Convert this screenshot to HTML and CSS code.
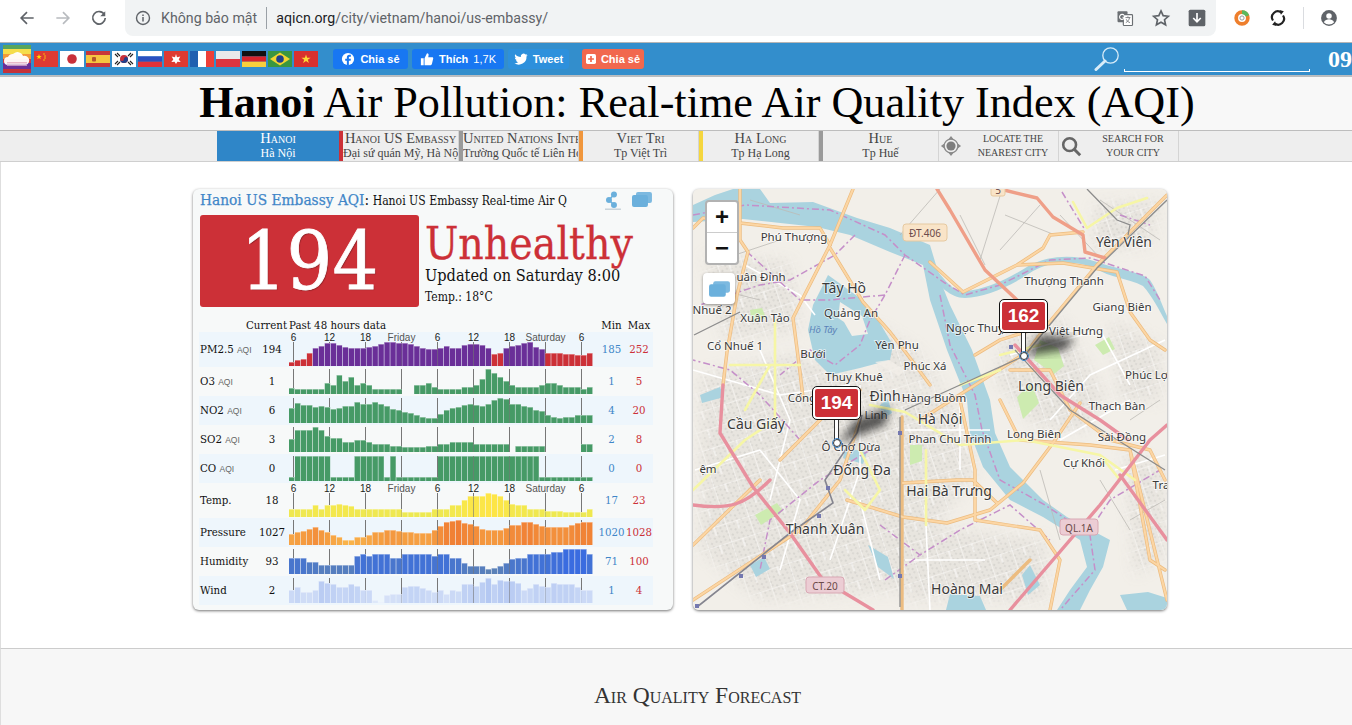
FILE: index.html
```html
<!DOCTYPE html>
<html lang="vi">
	<head>
		<meta charset="UTF-8" />
		<title>Hanoi Air Pollution: Real-time Air Quality Index (AQI)</title>
		<link rel="stylesheet" href="styles.css">
	</head>
	<body>
		<!-- browser toolbar -->
		<div class="chrome">
			<div class="chromeNav">
				<svg class="ico" viewBox="0 0 24 24"><path d="M20 12H5M12 5l-7 7 7 7" fill="none" stroke="#5f6368" stroke-width="2"/></svg>
				<svg class="ico" viewBox="0 0 24 24"><path d="M4 12h15M12 5l7 7-7 7" fill="none" stroke="#b8bbbf" stroke-width="2"/></svg>
				<svg class="ico" viewBox="0 0 24 24"><path d="M18.5 8A7.5 7.5 0 1 0 19.5 12" fill="none" stroke="#5f6368" stroke-width="2"/><path d="M19.5 4v6h-6z" fill="#5f6368"/></svg>
			</div>
			<div class="omnibox">
				<svg class="infoIco" viewBox="0 0 16 16"><circle cx="8" cy="8" r="6.5" fill="none" stroke="#5f6368" stroke-width="1.4"/><path d="M8 7v4.5M8 4.4v1.5" stroke="#5f6368" stroke-width="1.5"/></svg>
				<span class="notSecure">Không bảo mật</span>
				<span class="omniSep"></span>
				<span class="url"><b>aqicn.org</b>/city/vietnam/hanoi/us-embassy/</span>
				<span class="omniRight">
					<svg class="ico" viewBox="0 0 24 24"><rect x="3" y="4" width="12" height="13" rx="1" fill="#6b6f73"/><rect x="10" y="8" width="11" height="13" rx="1" fill="#fff" stroke="#6b6f73" stroke-width="1.4"/><path d="M12.5 11.5h6M15.5 10v1.5M17.5 11.5c-.5 3-2.500 5-4.500 6M13.500 13.500c.8 2 2.500 3.500 4.500 4" stroke="#6b6f73" fill="none"/><path d="M11 9a3 3 0 1 0 .5 2H9" stroke="#fff" fill="none" stroke-width="1.300"/></svg>
					<svg class="ico" viewBox="0 0 24 24"><path d="M12 3.500l2.600 5.700 6.200.7-4.600 4.200 1.300 6.100-5.500-3.100-5.500 3.100 1.300-6.100-4.600-4.200 6.200-.7z" fill="none" stroke="#5f6368" stroke-width="2"/></svg>
					<svg class="ico saveIco" viewBox="0 0 24 24"><rect x="2" y="2" width="20" height="20" rx="2" fill="#5f6368"/><path d="M12 6v10M7.500 12l4.500 4.500 4.500-4.500" stroke="#fff" stroke-width="2" fill="none"/></svg>
				</span>
			</div>
			<div class="chromeExt">
				<svg class="ico" viewBox="0 0 24 24"><circle cx="12" cy="12" r="7" fill="none" stroke="#ee7f2d" stroke-width="4.500"/><path d="M12 5a7 7 0 0 1 6.500 4.500" fill="none" stroke="#5cb85c" stroke-width="4.500"/><circle cx="12" cy="12" r="2.500" fill="none" stroke="#888"/></svg>
				<svg class="ico" viewBox="0 0 24 24"><path d="M6 15a7 7 0 0 1 10-9.500M18 9a7 7 0 0 1-10 9.500" fill="none" stroke="#222" stroke-width="2.600"/><path d="M14 2.500l5 1.500-3.500 4zM10 21.500l-5-1.500 3.500-4z" fill="#222"/></svg>
				<span class="extSep"></span>
				<svg class="ico" viewBox="0 0 24 24"><circle cx="12" cy="12" r="9.500" fill="#5f6368"/><circle cx="12" cy="9.500" r="3.300" fill="#fff"/><path d="M5.800 17c1.500-2.500 3.700-3.500 6.200-3.500s4.700 1 6.200 3.500a8 8 0 0 1-12.400 0z" fill="#fff"/></svg>
			</div>
		</div>

		<!-- blue top bar -->
		<div class="topBar">
			<svg class="logo" viewBox="0 0 28 28">
				<rect width="28" height="4" fill="#58a55c"/><rect y="4" width="28" height="5" fill="#f5dd4b"/><rect y="9" width="28" height="5" fill="#f39a3a"/><rect y="14" width="28" height="4" fill="#d63a3c"/><rect y="18" width="28" height="6" fill="#6a2f98"/><rect y="24" width="28" height="4" fill="#c5333a"/>
				<path d="M5 20a4 4 0 0 1 0-8 5 5 0 0 1 5-3 6 6 0 0 1 10 2 4.500 4.500 0 0 1 3 9z" fill="#fff" opacity=".95"/>
				<rect x="4" y="17" width="20" height="1.500" fill="#e8b8c8"/><rect x="4" y="19.500" width="20" height="1.500" fill="#c090c0"/>
			</svg>
			<div class="flags">
				<svg class="flag" viewBox="0 0 24 16"><rect width="24" height="16" fill="#de3a32"/><path d="M5 3l.7 2h2l-1.600 1.200.6 2L5 7l-1.700 1.200.6-2L2.300 5h2z" fill="#fd0"/><circle cx="10" cy="3" r=".7" fill="#fd0"/><circle cx="11" cy="5" r=".7" fill="#fd0"/><circle cx="11" cy="7" r=".7" fill="#fd0"/><circle cx="10" cy="9" r=".7" fill="#fd0"/></svg>
				<svg class="flag" viewBox="0 0 24 16"><rect width="24" height="16" fill="#fff"/><circle cx="12" cy="8" r="4.800" fill="#c8303a"/></svg>
				<svg class="flag" viewBox="0 0 24 16"><rect width="24" height="16" fill="#c8383a"/><rect y="4" width="24" height="8" fill="#f6c640"/><rect x="6" y="6" width="4" height="4.500" rx="1" fill="#b5562c"/></svg>
				<svg class="flag" viewBox="0 0 24 16"><rect width="24" height="16" fill="#fff"/><circle cx="12" cy="8" r="4" fill="#c8303a"/><path d="M8 8a4 4 0 0 0 8 0 2 2 0 0 0-4 0 2 2 0 0 1-4 0z" fill="#20408a"/><path d="M3 3l3 3M5 2l3 3M21 3l-3 3M19 2l-3 3M3 13l3-3M5 14l3-3M21 13l-3-3M19 14l-3-3" stroke="#222" stroke-width="1.100"/></svg>
				<svg class="flag" viewBox="0 0 24 16"><rect width="24" height="5.400" fill="#fff"/><rect y="5.400" width="24" height="5.300" fill="#2a50c0"/><rect y="10.700" width="24" height="5.300" fill="#e0323a"/></svg>
				<svg class="flag" viewBox="0 0 24 16"><rect width="24" height="16" fill="#de3a32"/><path d="M12 3l1 3.200 3.300-.6-1.600 3 2 2.500-3.300-.3L12 13l-1.400-2.200-3.300.3 2-2.500-1.600-3 3.300.6z" fill="#fff"/></svg>
				<svg class="flag" viewBox="0 0 24 16"><rect width="8" height="16" fill="#1f5fb0"/><rect x="8" width="8" height="16" fill="#fff"/><rect x="16" width="8" height="16" fill="#ee3f38"/></svg>
				<svg class="flag" viewBox="0 0 24 16"><rect width="24" height="8" fill="#eaeaea"/><rect y="8" width="24" height="8" fill="#dc3540"/></svg>
				<svg class="flag" viewBox="0 0 24 16"><rect width="24" height="5.400" fill="#111"/><rect y="5.400" width="24" height="5.300" fill="#d8242c"/><rect y="10.700" width="24" height="5.300" fill="#f8cf3c"/></svg>
				<svg class="flag" viewBox="0 0 24 16"><rect width="24" height="16" fill="#3a9640"/><path d="M12 1.500L22 8 12 14.500 2 8z" fill="#f2d530"/><circle cx="12" cy="8" r="3.800" fill="#20408a"/></svg>
				<svg class="flag" viewBox="0 0 24 16"><rect width="24" height="16" fill="#d8302e"/><path d="M12 3.500l1.100 3.300h3.500l-2.800 2 1.100 3.300-2.900-2-2.900 2 1.100-3.300-2.800-2h3.500z" fill="#fdd835"/></svg>
			</div>
			<div class="shareBtns">
				<span class="btn btnFb"><svg class="btnIco" viewBox="0 0 16 16"><circle cx="8" cy="8" r="7" fill="#fff"/><path d="M9 15.500V10h2l.3-2.300H9V6.400c0-.7.3-1.100 1.200-1.100h1.100V3.200C10.800 3.100 10.200 3 9.600 3 7.800 3 6.700 4.100 6.700 6v1.700H4.800V10h1.900v5.500z" fill="#1877f2"/></svg>Chia sẻ</span>
				<span class="btn btnFb btnLike"><svg class="btnIco" viewBox="0 0 16 16"><path d="M1 7h3.200v8H1zM5.200 7.200L8 1.500c1.300 0 2 .9 1.800 2.100L9.400 6H14c.8 0 1.300.7 1.100 1.400l-1.500 6.400c-.2.700-.7 1.200-1.400 1.200H5.200z" fill="#fff"/></svg>Thích <i>1,7K</i></span>
				<span class="btn btnTw"><svg class="btnIco" viewBox="0 0 16 16"><path d="M15.500 3.300c-.6.300-1.200.4-1.800.5.600-.4 1.100-1 1.400-1.700-.6.400-1.300.6-2 .8a3.100 3.100 0 0 0-5.300 2.800C5.200 5.600 2.900 4.400 1.400 2.500c-.8 1.400-.4 3.200 1 4.100-.5 0-1-.2-1.400-.4 0 1.500 1.100 2.800 2.500 3.100-.5.100-1 .1-1.400.1.400 1.200 1.600 2.100 2.900 2.100A6.300 6.300 0 0 1 .5 12.900 8.900 8.900 0 0 0 14.300 5c.5-.5 1-1 1.200-1.700z" fill="#fff"/></svg>Tweet</span>
				<span class="btn btnAdd"><svg class="btnIco btnIcoSmall" viewBox="0 0 12 12"><rect width="12" height="12" rx="2" fill="#fff"/><path d="M6 2.500v7M2.500 6h7" stroke="#f1684e" stroke-width="2"/></svg>Chia sẻ</span>
			</div>
			<div class="topSearch">
				<svg class="lens" viewBox="0 0 26 26"><circle cx="16.500" cy="9.500" r="7.700" fill="none" stroke="#d8ecf8" stroke-width="1.300"/><path d="M11 15L2 23.500" stroke="#d8ecf8" stroke-width="3" stroke-linecap="round"/></svg>
				<span class="searchLine"></span>
			</div>
			<div class="topNum">09</div>
		</div>

		<h1 class="pageTitle"><b>Hanoi</b> Air Pollution: Real-time Air Quality Index (AQI)</h1>

		<!-- station tabs -->
		<div class="tabs">
			<div class="tab tabOn"><span class="tabName">Hanoi</span><span class="tabSub">Hà Nội</span></div>
			<div class="tab tabRed"><span class="tabName">Hanoi US Embassy</span><span class="tabSub">Đại sứ quán Mỹ, Hà Nội</span></div>
			<div class="tab tabGrey"><span class="tabName">United Nations International</span><span class="tabSub">Trường Quốc tế Liên Hợp Quốc</span></div>
			<div class="tab tabOrange"><span class="tabName">Viet Tri</span><span class="tabSub">Tp Việt Trì</span></div>
			<div class="tab tabYellow"><span class="tabName">Ha Long</span><span class="tabSub">Tp Hạ Long</span></div>
			<div class="tab tabGrey"><span class="tabName">Hue</span><span class="tabSub">Tp Huế</span></div>
			<div class="tool">
				<svg class="toolIco" viewBox="0 0 24 24"><path d="M12 1l3 4h-6zM12 23l3-4h-6zM1 12l4-3v6zM23 12l-4-3v6z" fill="#8a8a8a"/><circle cx="12" cy="12" r="7.500" fill="none" stroke="#8a8a8a" stroke-width="1.500"/><circle cx="12" cy="12" r="5" fill="#7d7d7d"/></svg>
				<span class="toolText">Locate the<br>nearest city</span>
			</div>
			<div class="tool">
				<svg class="toolIco" viewBox="0 0 24 24"><circle cx="10.500" cy="10.500" r="7" fill="none" stroke="#666" stroke-width="2.800"/><path d="M15.500 15.500L22 22" stroke="#666" stroke-width="3.200"/></svg>
				<span class="toolText">Search for<br>your city</span>
			</div>
		</div>

		<div class="content">
			<div class="card aqiCard">
				<div class="cardHead">
					<span class="cardTitle"><b>Hanoi US Embassy AQI</b><em>:</em> Hanoi US Embassy Real-time Air Q</span>
					<svg class="shareIco" viewBox="0 0 18 20"><circle cx="10" cy="3.500" r="3" fill="#6bb0dc"/><circle cx="5" cy="9" r="3" fill="#6bb0dc"/><circle cx="10" cy="14" r="3" fill="#6bb0dc"/><path d="M10 3.500L5 9l5 5" stroke="#6bb0dc" stroke-width="1.500" fill="none"/><rect x="1" y="17.500" width="16" height="1.500" fill="#c8d4da"/></svg>
					<svg class="layersIco" viewBox="0 0 22 17"><rect x="5" y="1" width="16" height="11" rx="2" fill="#7cb9e0"/><rect x="1" y="4" width="16" height="12" rx="2" fill="#6bb0dc"/></svg>
				</div>
				<div class="aqiTop">
					<div class="aqiValue">194</div>
					<div class="aqiInfo">
						<div class="aqiStatus">Unhealthy</div>
						<div class="aqiTime">Updated on Saturday 8:00</div>
						<div class="aqiTemp">Temp.: 18°C</div>
					</div>
				</div>
				<div class="row rowHead">
					<span></span>
					<span class="cur">Current</span>
					<span>Past 48 hours data</span>
					<span class="num minCol">Min</span>
					<span class="num">Max</span>
				</div>
				<div class="row rowTall rowTint"><span class="lbl">PM2.5 <small>AQI</small></span><span class="cur">194</span><div class="spark" data-key="pm25"></div><span class="num low minCol">185</span><span class="num high">252</span></div>
				<div class="row"><span class="lbl">O3 <small>AQI</small></span><span class="cur">1</span><div class="spark" data-key="o3"></div><span class="num low minCol">1</span><span class="num high">5</span></div>
				<div class="row rowTint"><span class="lbl">NO2 <small>AQI</small></span><span class="cur">6</span><div class="spark" data-key="no2"></div><span class="num low minCol">4</span><span class="num high">20</span></div>
				<div class="row"><span class="lbl">SO2 <small>AQI</small></span><span class="cur">3</span><div class="spark" data-key="so2"></div><span class="num low minCol">2</span><span class="num high">8</span></div>
				<div class="row rowTint"><span class="lbl">CO <small>AQI</small></span><span class="cur">0</span><div class="spark" data-key="co"></div><span class="num low minCol">0</span><span class="num high">0</span></div>
				<div class="row rowTall"><span class="lbl">Temp.</span><span class="cur">18</span><div class="spark" data-key="temp"></div><span class="num low minCol">17</span><span class="num high">23</span></div>
				<div class="row rowTint"><span class="lbl">Pressure</span><span class="cur">1027</span><div class="spark" data-key="pressure"></div><span class="num low minCol">1020</span><span class="num high">1028</span></div>
				<div class="row"><span class="lbl">Humidity</span><span class="cur">93</span><div class="spark" data-key="humidity"></div><span class="num low minCol">71</span><span class="num high">100</span></div>
				<div class="row rowTint"><span class="lbl">Wind</span><span class="cur">2</span><div class="spark" data-key="wind"></div><span class="num low minCol">1</span><span class="num high">4</span></div>
			</div>

			<div class="card mapCard">
				<svg class="map" viewBox="693 189 474 421">
					<defs>
						<pattern id="urban" width="7" height="6" patternUnits="userSpaceOnUse" patternTransform="rotate(28)">
							<rect width="7" height="6" fill="#e6e3dd"/>
							<rect x="1" y="1" width="2" height="2" fill="#d4d1cc"/>
							<rect x="4" y="3" width="2" height="2" fill="#d8d5d0"/>
						</pattern>
						<pattern id="streets" width="24" height="19" patternUnits="userSpaceOnUse" patternTransform="rotate(-18)">
							<path d="M0 0h24M0 0v19M12 0v9" stroke="#fff" stroke-width="1.100" fill="none"/>
						</pattern>
						<filter id="soft"><feGaussianBlur stdDeviation="4"/></filter>
						<filter id="softer"><feGaussianBlur stdDeviation="7"/></filter>
						<mask id="cityMask" maskUnits="userSpaceOnUse" x="693" y="189" width="474" height="421">
							<g fill="#fff" filter="url(#softer)">
								<path d="M700 375L790 355 880 385 955 400 975 470 940 520 900 590 760 600 700 550z"/>
								<path d="M705 255L790 262 800 330 725 340z"/>
								<path d="M1005 335L1060 318 1105 395 1085 432 1035 425 995 380z"/>
								<path d="M1125 450L1165 470 1165 555 1135 575z"/>
								<path d="M1095 205L1160 200 1150 245 1095 250z"/>
								<path d="M875 325L915 350 945 390 885 378z"/>
								<path d="M905 525L1045 540 1045 600 905 600z"/>
								<path d="M1110 320L1160 345 1160 400 1120 400z"/>
							</g>
						</mask>
					</defs>
					<rect x="693" y="189" width="474" height="421" fill="#f2efe9"/>

					<!-- built up areas -->
					<g mask="url(#cityMask)">
						<rect x="693" y="189" width="474" height="421" fill="url(#urban)" opacity=".85"/>
						<rect x="693" y="189" width="474" height="421" fill="url(#streets)" opacity=".8"/>
					</g>

					<!-- greens -->
					<g fill="#cdebb0">
						<path d="M1040 340l18 8 6 18-10 8-20-14zM1095 345l14-8 6 12-12 6zM910 445l12 0 0 16-12 4zM750 310l12-2 4 10-14 4zM755 515l22-12 6 8-22 14zM1017 397l14-14 8 20-16 16z"/>
					</g>

					<!-- water -->
					<g fill="#aad3df">
						<path d="M693 205L715 195 733 189H760L770 203 813 202 857 218 890 228 930 245 942 285 950 305 972 350 990 400 995 433 1010 467 1043 500 1067 517 1110 540 1103 567 1090 590 1080 610H1057L1070 590 1087 567 1080 540 1043 517 1010 500 983 467 970 433 967 400 947 350 930 300 923 265 890 252 850 235 817 227 743 219 693 222z"/>
						<path d="M932 264C945 280 952 292 966 291 985 289 1005 281 1030 265 1050 255 1075 254 1097 262 1120 270 1142 272 1150 280 1158 292 1162 305 1167 316V324C1158 308 1152 296 1143 286 1128 278 1110 278 1095 268 1075 260 1050 261 1033 271 1010 287 985 297 965 298 950 298 938 285 930 272z"/>
						<path d="M828 275L860 298 872 310 893 345 890 360 860 368 830 375 815 360 808 330 813 305z"/>
						<path d="M700 395l20-8 4 10-22 6zM880 405l8-6 4 14-10 6zM845 448l22 4-4 12-20-6zM750 565l14-8 6 12-14 8zM950 594l30 2 6 14h-40zM868 545l20 12 6 22-16-12zM1030 565l10 20-12 10-6-20zM1120 595l28-3 19 6v12h-40z"/>
					</g>
					<path d="M840 302l22 14 6 18-16 2-8-14-6-4z" fill="#f2efe9"/>
					<path d="M875 362l14-2 16 10-6 6z" fill="#f2efe9" opacity=".8"/>

					<!-- white streets -->
					<g fill="none" stroke="#fff" stroke-width="1.600">
						<path d="M745 265L800 295 815 315M693 370L780 395 850 385M760 350L790 420 770 500M860 385L860 470 830 560M905 430H990M905 560H985M925 505L930 610M960 400L960 470M1010 355L1100 330M1050 420L1090 375 1165 340M1100 330L1130 385M1060 440L1130 400M1165 455L1115 470M760 450L800 500 780 570M860 500L880 580M695 470L760 450"/>
					</g>
					<g fill="none" stroke="#bdbab5" stroke-width=".8">
						<path d="M1000 196L980 260M1040 205L1000 250M1060 215L1100 258M940 189L900 235M1100 200L1160 240M1130 420L1160 400M1130 520L1165 500M720 260L780 240M760 300L720 290M1040 470L1060 540M1100 480L1130 530M960 215L985 265M1005 215L1055 235M750 200L800 215"/>
					</g>

					<!-- boundaries -->
					<g fill="none" stroke="#c58fc9" stroke-width="1.500" stroke-dasharray="7 3 2 3">
						<path d="M693 215L745 205 830 210 885 235 905 255 945 283 965 295 1000 285 1050 260 1090 258 1145 276 1160 300"/>
						<path d="M855 235L835 255 790 280 760 285 700 305M905 255L885 295 870 320 860 345 835 365 810 350 780 375M885 295L830 300 800 300 745 250"/>
						<path d="M940 295L950 345 975 395 982 430 1000 480 1045 505 1090 535 1095 570 1060 610"/>
						<path d="M1062 192L1085 230M1120 215L1150 225M800 440L760 395 730 370 693 360M870 450L820 480 770 520 760 570M880 525L920 555 960 530 1010 505 1050 540M1090 530L1110 500 1160 470M885 580L920 555"/>
					</g>

					<!-- roads -->
					<g fill="none" stroke="#ecbc80" stroke-width="3.400" stroke-linecap="round" stroke-linejoin="round">
						<path d="M693 228L703 218 740 223 783 228 820 228 830 245M740 189L740 240 748 252 737 295 727 352 723 385"/>
						<path d="M853 189L830 245 803 298 793 318 800 372 803 398"/>
						<path d="M830 248L863 302 890 332 910 358 930 385"/>
						<path d="M847 500L903 517 947 523 990 510 1023 483 1053 443 1080 403"/>
						<path d="M903 483L957 480 973 480 997 503"/>
						<path d="M860 420L840 480 800 530 693 600M780 460L830 410 860 390M693 545L760 480"/>
						<path d="M930 262L963 292 1017 265 1043 248 1050 235 1083 232M1017 265L1063 263 1117 272 1130 312 1150 340 1165 350"/>
						<path d="M1167 195L1097 265 1047 325 1027 352 920 420M975 355L1000 340 1047 325M1010 370L1050 370 1070 410 1110 440 1150 450 1165 480"/>
						<path d="M1000 400L1020 440 1090 445 1130 450 1167 600M1130 450L1150 560 1165 570M960 400L975 470 975 520 1040 530 1060 560 1050 610"/>
						<path d="M902 417L902 610M1000 590L1030 560"/>
					</g>
					<g fill="none" stroke="#fcd6a4" stroke-width="2" stroke-linecap="round" stroke-linejoin="round">
						<path d="M693 228L703 218 740 223 783 228 820 228 830 245M740 189L740 240 748 252 737 295 727 352 723 385"/>
						<path d="M853 189L830 245 803 298 793 318 800 372 803 398"/>
						<path d="M830 248L863 302 890 332 910 358 930 385"/>
						<path d="M847 500L903 517 947 523 990 510 1023 483 1053 443 1080 403"/>
						<path d="M903 483L957 480 973 480 997 503"/>
						<path d="M860 420L840 480 800 530 693 600M780 460L830 410 860 390M693 545L760 480"/>
						<path d="M930 262L963 292 1017 265 1043 248 1050 235 1083 232M1017 265L1063 263 1117 272 1130 312 1150 340 1165 350"/>
						<path d="M1167 195L1097 265 1047 325 1027 352 920 420M975 355L1000 340 1047 325M1010 370L1050 370 1070 410 1110 440 1150 450 1165 480"/>
						<path d="M1000 400L1020 440 1090 445 1130 450 1167 600M1130 450L1150 560 1165 570M960 400L975 470 975 520 1040 530 1060 560 1050 610"/>
					</g>
					<g fill="none" stroke="#f6f6a6" stroke-width="2.600" stroke-linecap="round" stroke-linejoin="round">
						<path d="M730 365H800M775 320L775 420 745 440 693 490M770 365L745 410M860 450L880 490 865 510 845 490M870 405L905 412 960 445 1025 440 1100 455 1120 480M926 450V525M1000 355L1040 345M1000 370L960 385M1073 202L1087 228 1117 208 1147 198M1135 480L1100 455"/>
					</g>
					<g fill="none" stroke="#ef9f88" stroke-width="3.400" stroke-linecap="round" stroke-linejoin="round">
						<path d="M1000 189L1037 198 1053 217 1083 235 1085 252 1105 258"/>
						<path d="M1017 300L985 270 950 210 937 189"/>
					</g>
					<g fill="none" stroke="#e8909e" stroke-width="3.400" stroke-linecap="round" stroke-linejoin="round">
						<path d="M723 385L720 433 753 487 790 533 823 580 873 610"/>
						<path d="M693 505C730 510 745 505 770 480"/>
						<path d="M1015 345L1060 395 1100 420 1128 440"/>
						<path d="M1010 610L1100 505 1150 440 1167 425M1120 475L1167 540"/>
					</g>

					<!-- rail and metro -->
					<g fill="none" stroke="#8c8c8c" stroke-width="1.300">
						<path d="M694 335L740 312M900 417V607M905 410L960 385 1024 356 1097 268 1167 200M1087 189L1117 220 1130 225 1128 235"/>
						<path d="M1015 350L1070 410 1165 470"/>
					</g>
					<path d="M697 607L790 533 833 503 825 480 857 433 862 415" fill="none" stroke="#85858f" stroke-width="1.600"/>
					<g fill="#7478b0">
						<rect x="695" y="604" width="4" height="4"/><rect x="739" y="574" width="4" height="4"/><rect x="762" y="555" width="4" height="4"/><rect x="817" y="514" width="4" height="4"/><rect x="826" y="486" width="4" height="4"/><rect x="898" y="431" width="4" height="4"/><rect x="898" y="574" width="4" height="4"/><rect x="1009" y="345" width="4" height="4"/>
					</g>

					<!-- shields -->
					<g class="shield">
						<rect x="903" y="224" width="44" height="17" rx="3" fill="#f9e4c8" stroke="#e6c9a0"/><text x="925" y="237">ĐT.406</text>
						<rect x="991" y="184" width="14" height="12" rx="2" fill="#f9e4c8" stroke="#e6c9a0"/><text x="998" y="194">5</text>
						<rect x="1060" y="519" width="38" height="16" rx="3" fill="#eccdd4" stroke="#d9a8b4"/><text x="1079" y="532">QL.1A</text>
						<rect x="806" y="577" width="38" height="16" rx="3" fill="#eccdd4" stroke="#d9a8b4"/><text x="825" y="590">CT.20</text>
					</g>

					<!-- place names -->
					<g class="place">
						<text x="794" y="241">Phú Thượng</text>
						<text x="761" y="281">uân Đỉnh</text>
						<text x="712" y="314">Nhuế 2</text>
						<text x="765" y="322">Xuân Tảo</text>
						<text x="735" y="350">Cổ Nhuế 1</text>
						<text x="813" y="358">Bưới</text>
						<text x="851" y="317">Quảng An</text>
						<text x="897" y="349">Yên Phụ</text>
						<text x="925" y="370">Phúc Xá</text>
						<text x="854" y="381">Thuy Khuê</text>
						<text x="802" y="402">Cống</text>
						<text x="934" y="402">Hàng Buồm</text>
						<text x="876" y="419">Linh</text>
						<text x="851" y="451">Ô Chợ Dừa</text>
						<text x="950" y="443">Phan Chu Trinh</text>
						<text x="1064" y="285">Thượng Thanh</text>
						<text x="1122" y="311">Giang Biên</text>
						<text x="975" y="332">Ngọc Thuỵ</text>
						<text x="1076" y="335">Việt Hưng</text>
						<text x="1148" y="379">Phúc Lợi</text>
						<text x="1117" y="410">Thạch Bàn</text>
						<text x="1034" y="438">Long Biên</text>
						<text x="1122" y="441">Sài Đồng</text>
						<text x="1084" y="467">Cự Khối</text>
						<text x="1161" y="489">Tra</text>
						<text x="708" y="473">ệm</text>
					</g>
					<g class="place placeBig">
						<text x="1124" y="247">Yên Viên</text>
						<text x="844" y="293">Tây Hồ</text>
						<text x="885" y="401">Đình</text>
						<text x="1051" y="391">Long Biên</text>
						<text x="756" y="429">Cầu Giấy</text>
						<text x="940" y="424">Hà Nội</text>
						<text x="862" y="475">Đống Đa</text>
						<text x="949" y="496">Hai Bà Trưng</text>
						<text x="825" y="534">Thanh Xuân</text>
						<text x="967" y="594">Hoàng Mai</text>
					</g>
					<text class="lake" x="823" y="333">Hồ Tây</text>

					<!-- marker shadows -->
					<path d="M1026 356L1040 335 1075 338 1065 350z" fill="#222" opacity=".75" filter="url(#soft)"/>
					<path d="M839 443L855 420 890 407 885 425z" fill="#222" opacity=".75" filter="url(#soft)"/>
				</svg>

				<div class="zoomCtl"><span class="zoomBtn">+</span><span class="zoomBtn">−</span></div>
				<div class="layerBtn"><svg viewBox="0 0 22 17"><rect x="5" y="1" width="16" height="11" rx="2" fill="#7cb9e0"/><rect x="1" y="4" width="16" height="12" rx="2" fill="#6bb0dc"/></svg></div>

				<div class="pin pin162"><span class="pinBox">162</span><span class="pinStem"></span><span class="pinDot"></span></div>
				<div class="pin pin194"><span class="pinBox">194</span><span class="pinStem"></span><span class="pinDot"></span></div>
			</div>
		</div>

		<div class="forecast"><h2>Air Quality Forecast</h2></div>

		<script src="charts.js"></script>
	</body>
</html>
```

FILE: styles.css
```css
html, body {
	margin: 0;
	padding: 0;
	height: 725px;
	overflow: hidden;
	background-color: #fff;
}
body {
	font-family: "Liberation Serif", serif;
}

/* browser toolbar */
.chrome {
	display: flex;
	height: 42px;
	background-color: #fff;
	border-bottom: 1px solid #b5b5b5;
	box-sizing: content-box;
}
.ico {
	width: 20px;
	height: 20px;
	flex: none;
}
.chromeNav {
	display: flex;
	align-items: center;
	gap: 16px;
	width: 125px;
	height: 36px;
	padding-left: 17px;
	box-sizing: border-box;
}
.omnibox {
	display: flex;
	align-items: center;
	width: 1091px;
	height: 36px;
	padding-left: 10px;
	box-sizing: border-box;
	background-color: #f1f3f4;
	border-radius: 0 0 8px 8px;
	font-family: Roboto, "Liberation Sans", sans-serif;
	font-size: 14.2px;
	color: #5f6368;
}
.infoIco {
	width: 16px;
	height: 16px;
	margin-right: 10px;
}
.omniSep {
	width: 1px;
	height: 22px;
	margin: 0 9px;
	background-color: #9aa0a6;
}
.url b {
	font-weight: normal;
	color: #202124;
}
.omniRight {
	display: flex;
	align-items: center;
	gap: 16px;
	margin-left: auto;
	margin-right: 9px;
}
.chromeExt {
	display: flex;
	align-items: center;
	height: 36px;
	padding-left: 16px;
	gap: 16px;
}
.extSep {
	width: 1px;
	height: 22px;
	margin: 0 -1px;
	background-color: #dadce0;
}

/* blue bar */
.topBar {
	display: flex;
	align-items: center;
	height: 32px;
	background-color: #338ecc;
	border-bottom: 2px solid #b9bdc0;
	color: #fff;
}
.logo {
	width: 28px;
	height: 28px;
	margin-left: 3px;
	flex: none;
}
.flags {
	display: flex;
	gap: 2px;
	margin-left: 3px;
}
.flag {
	width: 24px;
	height: 16px;
	flex: none;
}
.shareBtns {
	display: flex;
	margin-left: 15px;
	font-family: "Liberation Sans", sans-serif;
	font-size: 11px;
	font-weight: bold;
}
.btn {
	display: flex;
	align-items: center;
	justify-content: center;
	gap: 5px;
	height: 20px;
	border-radius: 3px;
	margin-right: 4px;
	width: 75px;
}
.btnLike {
	width: 92px;
}
.btn i {
	font-style: normal;
	font-weight: normal;
}
.btnFb {
	background-color: #1877f2;
}
.btnTw {
	width: 61px;
	background-color: #2d90dc;
	margin-right: 13px;
}
.btnAdd {
	width: 62px;
	background-color: #f1684e;
}
.btnIco {
	width: 14px;
	height: 14px;
}
.btnIcoSmall {
	width: 10px;
	height: 10px;
}
.topSearch {
	display: flex;
	align-items: flex-end;
	margin-left: auto;
	height: 26px;
}
.lens {
	width: 26px;
	height: 26px;
}
.searchLine {
	display: block;
	width: 186px;
	height: 3px;
	margin-left: 4px;
	border: 1px solid #fff;
	border-top: 0;
	box-sizing: border-box;
}
.topNum {
	width: 24px;
	margin-left: 18px;
	overflow: hidden;
	font-size: 24px;
	font-weight: bold;
	white-space: nowrap;
}

/* title */
.pageTitle {
	margin: 0;
	height: 53px;
	padding-left: 42px;
	line-height: 52px;
	background-color: #f8f8f8;
	font-size: 44.2px;
	font-weight: normal;
	text-align: center;
	color: #000;
	white-space: nowrap;
}

/* station tabs */
.tabs {
	display: flex;
	height: 30px;
	padding-left: 217px;
	background-color: #eeeeee;
	border-top: 1px solid #bdbdbd;
	border-bottom: 1px solid #cfcfcf;
	color: #444;
}
.tab {
	width: 120px;
	flex: none;
	box-sizing: border-box;
	overflow: hidden;
	text-align: center;
	white-space: nowrap;
	border-right: 1px solid #d4d4d4;
}
.tabOn {
	width: 122px;
	background-color: #2f86c8;
	color: #fff;
	border-right: 0;
}
.tabRed {
	border-left: 4px solid #cc3037;
}
.tabGrey {
	border-left: 4px solid #9a9a9a;
}
.tabOrange {
	border-left: 4px solid #f0963c;
}
.tabYellow {
	border-left: 4px solid #f5d63e;
}
.tabName {
	display: block;
	font-size: 14.5px;
	line-height: 15px;
	font-variant: small-caps;
}
.tabSub {
	display: block;
	font-size: 12px;
	line-height: 15px;
}
.tool {
	display: flex;
	align-items: center;
	width: 120px;
	flex: none;
	box-sizing: border-box;
	border-right: 1px solid #d4d4d4;
	padding-left: 1px;
}
.toolIco {
	width: 22px;
	height: 22px;
	flex: none;
}
.toolText {
	flex: 1;
	padding-left: 6px;
	font-size: 10px;
	line-height: 14px;
	text-align: center;
	text-transform: uppercase;
}

/* cards */
.content {
	display: flex;
	gap: 20px;
	height: 486px;
	padding: 27px 0 0 193px;
	box-sizing: border-box;
	background-color: #fff;
	border-left: 1px solid #dedede;
}
.card {
	height: 421px;
	box-sizing: border-box;
	border-radius: 6px;
	background-color: #f7f9f9;
	box-shadow: 0 1px 3px rgba(0, 0, 0, 0.55);
}
.aqiCard {
	width: 480px;
	margin-left: -1px;
	padding: 0 20px 0 6px;
	font-family: "DejaVu Serif Condensed", "DejaVu Serif", serif;
	font-stretch: condensed;
	color: #111;
}
.cardHead {
	display: flex;
	align-items: flex-start;
	height: 26px;
	padding-top: 2px;
	box-sizing: border-box;
}
.cardTitle {
	width: 371px;
	margin-left: 1px;
	overflow: hidden;
	white-space: nowrap;
	font-size: 12.1px;
}
.cardTitle b {
	font-size: 15.3px;
	font-weight: normal;
	color: #3f86c8;
	-webkit-text-stroke: 0.25px #3f86c8;
}
.cardTitle em {
	font-style: normal;
	font-size: 15.3px;
}
.shareIco {
	width: 18px;
	height: 20px;
	margin-left: 34px;
}
.layersIco {
	width: 22px;
	height: 17px;
	margin-left: 9px;
}
.aqiTop {
	display: flex;
	height: 92px;
	margin-bottom: 10px;
}
.aqiValue {
	width: 219px;
	margin-left: 1px;
	height: 92px;
	line-height: 94px;
	background-color: #cc3037;
	border-radius: 3px;
	color: #fff;
	font-size: 80px;
	text-align: center;
	-webkit-text-stroke: 0.8px #fff;
	text-shadow: 1px 1px 1px rgba(0, 0, 0, 0.3);
}
.aqiInfo {
	margin-left: 6px;
	white-space: nowrap;
}
.aqiStatus {
	font-size: 44px;
	line-height: 50px;
	color: #cc3037;
	margin-top: 4px;
	-webkit-text-stroke: 0.3px #cc3037;
}
.aqiTime {
	font-size: 16.2px;
	line-height: 20px;
	margin-top: -3px;
}
.aqiTemp {
	font-size: 12px;
	line-height: 16px;
	margin-top: 3px;
}
.row {
	display: grid;
	grid-template-columns: 56px 34px 304px 1fr 28px;
	height: 29px;
	align-items: center;
	font-size: 11.4px;
	width: 454px;
}
.rowHead {
	height: 15px;
}
.rowTall {
	height: 35px;
}
.rowTint {
	background-color: #eef6fc;
}
.lbl {
	padding-left: 1px;
	white-space: nowrap;
	margin-bottom: 2px;
}
.lbl small {
	font-family: "Liberation Sans", sans-serif;
	font-size: 8.5px;
	color: #666;
}
.cur {
	text-align: center;
	white-space: nowrap;
	margin-bottom: 2px;
}
.rowHead .cur {
	justify-self: end;
	margin-right: 2px;
	margin-bottom: 0;
}
.num {
	text-align: center;
	white-space: nowrap;
	margin-bottom: 2px;
}
.rowHead .num {
	margin-bottom: 0;
}
.minCol {
	padding-left: 5px;
}
.low {
	color: #3f86c8;
}
.high {
	color: #cc3037;
}
.spark {
	height: 100%;
}
.spark svg {
	display: block;
}
.spark text {
	font-family: "Liberation Sans", sans-serif;
	font-size: 10px;
	text-anchor: middle;
	fill: #222;
}
.spark .dayLabel {
	fill: #555;
}

/* map */
.mapCard {
	position: relative;
	width: 474px;
	overflow: hidden;
	background-color: #f2efe9;
}
.map {
	display: block;
	width: 474px;
	height: 421px;
}
.place text {
	font-family: "Noto Sans", sans-serif;
	font-size: 11.5px;
	fill: #3a3a3a;
	text-anchor: middle;
	stroke: #fff;
	stroke-width: 2px;
	stroke-opacity: 0.6;
	paint-order: stroke;
}
.placeBig text {
	font-size: 14px;
}
.lake {
	font-family: "Noto Sans", sans-serif;
	font-size: 9.5px;
	font-style: italic;
	fill: #5a82b8;
	text-anchor: middle;
}
.shield text {
	font-family: "Noto Sans", sans-serif;
	font-size: 10px;
	fill: #6b4a4a;
	text-anchor: middle;
}
.zoomCtl {
	position: absolute;
	left: 12px;
	top: 11px;
	display: flex;
	flex-direction: column;
	width: 30px;
	border: 2px solid rgba(0, 0, 0, 0.3);
	border-radius: 4px;
	background-color: #fff;
}
.zoomBtn {
	height: 30px;
	line-height: 29px;
	font-family: "Liberation Sans", sans-serif;
	font-size: 24px;
	font-weight: bold;
	text-align: center;
	color: #111;
}
.zoomBtn + .zoomBtn {
	border-top: 1px solid #ccc;
}
.layerBtn {
	position: absolute;
	left: 10px;
	top: 84px;
	display: flex;
	align-items: center;
	justify-content: center;
	width: 32px;
	height: 31px;
	border-radius: 4px;
	background-color: #fff;
	box-shadow: 0 1px 3px rgba(0, 0, 0, 0.4);
}
.layerBtn svg {
	width: 23px;
	height: 18px;
}
.pin {
	position: absolute;
	display: flex;
	flex-direction: column;
	align-items: center;
	width: 47px;
}
.pin162 {
	left: 307px;
	top: 111px;
}
.pin194 {
	left: 120px;
	top: 198px;
}
.pinBox {
	width: 47px;
	height: 32px;
	box-sizing: border-box;
	line-height: 27px;
	border: 2px solid #fff;
	outline: 1px solid #111;
	border-radius: 4px;
	background-color: #cc3037;
	color: #fff;
	font-family: "Liberation Sans", sans-serif;
	font-size: 19px;
	font-weight: bold;
	text-align: center;
}
.pinStem {
	width: 3px;
	height: 22px;
	background-color: #fff;
	border-left: 1px solid #333;
	border-right: 1px solid #333;
	box-sizing: content-box;
	margin-top: 1px;
}
.pinDot {
	width: 6px;
	height: 6px;
	margin-top: -3px;
	border: 1px solid #333;
	outline: 1px solid #3f86c8;
	border-radius: 50%;
	background-color: #fff;
}

/* forecast heading */
.forecast {
	height: 76px;
	padding-left: 42px;
	background-color: #f7f7f7;
	border-top: 1px solid #cccccc;
	border-left: 1px solid #dedede;
}
.forecast h2 {
	margin: 0;
	padding-top: 34px;
	font-size: 23.5px;
	line-height: 24px;
	font-weight: normal;
	font-variant: small-caps;
	text-align: center;
	color: #333;
}
```

FILE: charts.js
```js
var hourLabels = ['6', '12', '18', 'Friday', '6', '12', '18', 'Saturday', '6'],
	series = {
		pm25: [4,6,7,13,18,20,23,23,21,19,18,18,18,19,20,22,24,24,23,23,22,20,18,17,17,18,20,18,18,21,22,22,21,18,12,13,18,20,21,23,24,19,17,13,13,13,12,12,11,11,13],
		o3: [6,5,5,5,5,5,11,9,19,13,17,9,11,9,5,5,5,5,5,0,0,9,9,11,7,5,5,5,5,7,7,9,15,25,21,17,13,9,7,7,7,7,9,11,11,9,7,7,7,5,7],
		no2: [15,20,18,18,16,17,16,14,15,17,17,21,19,19,21,19,17,14,13,11,10,8,6,5,5,9,13,15,16,18,19,18,17,19,23,25,24,19,19,17,16,13,12,8,6,5,6,6,8,8,8],
		so2: [13,22,22,22,25,22,16,14,14,10,10,12,12,10,8,8,8,6,6,5,5,5,5,6,6,8,8,10,10,10,10,8,8,8,8,8,8,0,6,6,6,6,6,0,0,0,0,0,0,8,8],
		co: [4,25,25,25,25,25,25,4,4,4,4,25,25,25,25,25,4,25,4,4,4,4,4,4,4,25,25,25,25,25,25,25,25,25,25,25,25,25,25,25,25,25,4,4,4,4,4,4,4,4,4],
		temp: [8,8,8,8,12,8,12,12,13,12,11,8,8,8,8,8,8,8,8,5,5,5,5,5,8,8,8,12,12,17,21,21,21,24,23,21,17,13,12,12,8,8,8,6,6,6,5,5,5,5,8],
		pressure: [11,13,14,16,18,15,13,10,8,5,5,8,8,10,13,13,15,15,14,13,13,12,12,12,15,19,23,24,25,22,21,19,16,15,15,15,17,20,20,23,23,21,19,18,18,18,18,20,22,23,23],
		humidity: [16,16,16,12,12,9,9,9,9,9,9,18,20,18,20,20,20,16,16,20,20,20,20,20,18,20,20,16,16,11,8,8,8,5,6,8,11,15,16,16,20,20,20,20,22,22,25,25,25,25,20],
		wind: [13,16,11,11,13,22,20,19,16,16,19,17,13,13,3,1,8,9,9,16,17,17,15,13,11,13,9,13,12,19,19,17,21,25,19,23,22,22,20,13,15,19,17,16,20,19,19,19,16,13,13]
	},
	// low and high colour of each series
	ramps = {
		o3: ['#469a66', '#469a66'],
		no2: ['#469a66', '#469a66'],
		so2: ['#469a66', '#469a66'],
		co: ['#469a66', '#469a66'],
		temp: ['#e8ea55', '#ffe545'],
		pressure: ['#fbc050', '#f07e34'],
		humidity: ['#6488ac', '#3a6ce0'],
		wind: ['#e4ecfa', '#b4c8f2']
	},
	toRgb = function (hex) {
		return [parseInt(hex.substr(1, 2), 16), parseInt(hex.substr(3, 2), 16), parseInt(hex.substr(5, 2), 16)];
	},
	mix = function (ramp, t) {
		var a = toRgb(ramp[0]),
		b = toRgb(ramp[1]);
		return 'rgb(' + Math.round(a[0] + (b[0] - a[0]) * t) + ',' + Math.round(a[1] + (b[1] - a[1]) * t) + ',' + Math.round(a[2] + (b[2] - a[2]) * t) + ')';
	},
	barColor = function (key, h) {
		if (key === 'pm25') {
			return h < 14 ? '#cc3037' : '#6a2f98';
		}
		return mix(ramps[key], h / 25);
	},
	drawSpark = function (el) {
		var key = el.getAttribute('data-key'),
		tall = (key === 'pm25' || key === 'temp'),
		rowH = tall ? 35 : 29,
		base = rowH - (tall ? 1 : 2),
		pitch = 304 / 51,
		out = '<svg width="304" height="' + rowH + '" viewBox="0 0 304 ' + rowH + '">',
		i, h, x;

		for (i = 0; i < 9; i++) {
			x = 4.5 + 36 * i;
			out += '<path d="M' + x + ' ' + (tall ? 10 : 2) + 'V' + base + '" stroke="#777" fill="none"/>';
			if (tall) {
				out += '<text x="' + x + '" y="9"' + (hourLabels[i].length > 2 ? ' class="dayLabel"' : '') + '>' + hourLabels[i] + '</text>';
			}
		}
		for (i = 0; i < 51; i++) {
			h = series[key][i];
			if (h > 0) {
				x = (i * pitch).toFixed(2);
				out += '<rect x="' + x + '" y="' + (base - h) + '" width="5.4" height="' + h + '" fill="' + barColor(key, h) + '"/>';
				out += '<rect x="' + x + '" y="' + (base - h) + '" width="5.4" height="1" fill="#fff" opacity=".35"/>';
			}
		}
		el.innerHTML = out + '</svg>';
	},
	sparks = document.querySelectorAll('.spark'),
	n;

for (n = 0; n < sparks.length; n++) {
	drawSpark(sparks[n]);
}
```
